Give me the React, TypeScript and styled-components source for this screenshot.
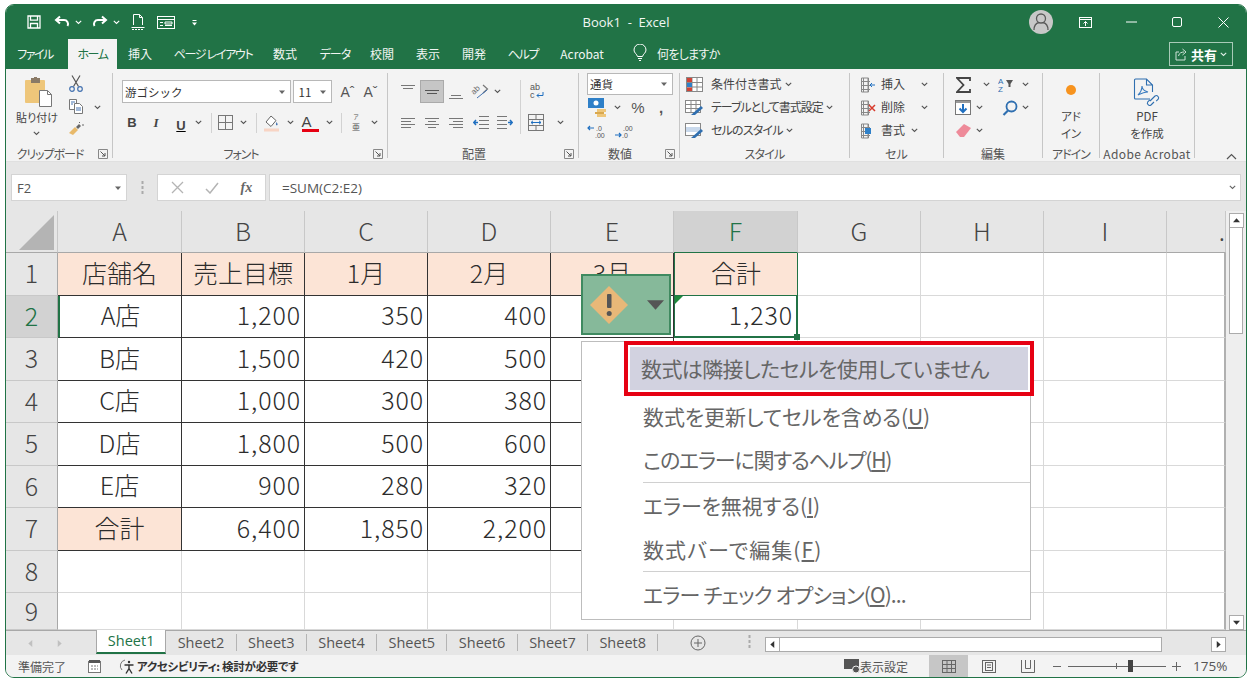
import React, {FC, ReactNode} from "react";
import styled, {createGlobalStyle} from "styled-components";

const jp = `"Noto Sans CJK JP", "Noto Sans", sans-serif`;
const latin = `"Open Sans", "Noto Sans CJK JP", sans-serif`;
const GREEN = "#217346";

const Global = createGlobalStyle`
  html, body { margin: 0; padding: 0; background: #fff; }
  body { font-family: ${jp}; }
  * { box-sizing: border-box; }
`;

const Window = styled.div`
  width: 1242px; height: 674px; margin: 4px 0 0 5px;
  display: flex; flex-direction: column; overflow: hidden;
  border: 1px solid ${GREEN}; border-radius: 9px; background: #f3f3f3;
`;
const TitleBar = styled.div`
  height: 34px; background: ${GREEN}; color: #fff; flex: none;
  display: grid; grid-template-columns: 1fr auto 1fr; align-items: center;
`;
const Left = styled.div`display: flex; align-items: center; padding-left: 18px;`;
const Right = styled.div`display: flex; justify-content: flex-end; align-items: center;`;
const Title = styled.div`font: 13px ${latin}; color: #f2f7f4; white-space: pre; margin-bottom: 1px;`;
const Slot = styled.div<{$w: number; $ml?: number}>`
  width: ${p => p.$w}px; margin-left: ${p => p.$ml || 0}px; flex: none;
  display: flex; align-items: center; justify-content: center;
  & > svg { flex: none; }
`;
const Avatar = styled.div`
  width: 24px; height: 24px; border-radius: 50%; background: #c8c8c8;
  display: flex; align-items: center; justify-content: center;
`;
const TabBar = styled.div`height: 30px; background: ${GREEN}; display: flex; flex: none; align-items: stretch;`;
const Tab = styled.div<{$w: number; $active?: boolean; $ml?: number; $ls?: number}>`
  width: ${p => p.$w}px; margin-left: ${p => p.$ml || 0}px; flex: none; padding-bottom: 2px;
  display: flex; align-items: center; justify-content: center;
  font: 12px ${jp}; font-feature-settings: "palt"; white-space: nowrap;
  letter-spacing: ${p => p.$ls || 0}px;
  color: ${p => p.$active ? GREEN : "#f1f6f3"}; background: ${p => p.$active ? "#f3f3f3" : "transparent"};
`;
const TellMe = styled.div`display: flex; align-items: center; gap: 10px; margin-left: 22px; padding-bottom: 2px; color: #f1f6f3; font: 12px ${jp}; font-feature-settings: "palt"; letter-spacing: -.7px;`;
const Share = styled.div`
  width: 64px; height: 24px; margin: 3px 13px 0 auto; border: 1px solid #a9cbb8;
  display: flex; align-items: center; justify-content: center; gap: 3px;
  color: #fff; font: 700 13px ${jp};
`;

const Ribbon = styled.div`height: 93px; flex: none; display: flex; padding-top: 4px; background: #f3f3f3; border-bottom: 1px solid #e0e0e0;`;
const Group = styled.div<{$w: number; $last?: boolean}>`
  width: ${p => p.$w}px; height: 85px; flex: none; display: flex; flex-direction: column;
  border-right: ${p => p.$last ? "none" : "1px solid #c6c6c6"};
`;
const GroupBody = styled.div<{$pl?: number}>`flex: 1; min-height: 0; padding-left: ${p => p.$pl || 0}px; display: flex;`;
const GroupFoot = styled.div`height: 15px; flex: none; display: flex; align-items: center; margin-bottom: -3px;`;
const GroupLabel = styled.div<{$ls?: number}>`flex: 1; text-align: center; font: 12px/15px ${jp}; color: #555; font-feature-settings: "palt"; white-space: nowrap; letter-spacing: ${p => p.$ls || 0}px;`;
const Launcher = styled.div`width: 18px; display: flex; align-items: center; justify-content: center;`;
const Col = styled.div<{$w?: number}>`
  display: flex; flex-direction: column;
  ${p => p.$w ? `width: ${p.$w}px; flex: none;` : ""}
`;
const Row = styled.div<{$h: number; $pl?: number; $mt?: number}>`
  height: ${p => p.$h}px; padding-left: ${p => p.$pl || 0}px; margin-top: ${p => p.$mt || 0}px;
  display: flex; align-items: center; flex: none;
`;
const Combo = styled.div<{$w: number; $h: number}>`
  width: ${p => p.$w}px; height: ${p => p.$h}px; flex: none; background: #fff; border: 1px solid #b8b8b8;
  display: flex; align-items: center; justify-content: space-between; padding: 0 5px 0 2px;
  font: 11.5px ${jp}; color: #333;
`;
const Sep = styled.div<{$h: number}>`width: 1px; height: ${p => p.$h}px; background: #d2d2d2; flex: none;`;
const Pressed = styled.div`
  width: 24px; height: 23px; background: #c6c6c6; border: 1px solid #aaa;
  display: flex; align-items: center; justify-content: center;
`;
const Glyph = styled.span<{$size?: number; $weight?: number; $color?: string; $serif?: boolean}>`
  font: ${p => p.$serif ? "italic" : "normal"} ${p => p.$weight || 400} ${p => p.$size || 13}px ${p => p.$serif ? `"Liberation Serif", serif` : `"Liberation Sans", sans-serif`};
  color: ${p => p.$color || "#444"}; line-height: 1;
`;
const Phonetic = styled.div`display: flex; flex-direction: column; align-items: center; color: #555; font-family: ${jp};`;
const PhoneticTop = styled.span`font-size: 5.5px; line-height: 8px;`;
const PhoneticMain = styled.span`font-size: 8px; line-height: 12px;`;
const RibbonText = styled.span<{$w?: number; $ml?: number; $ls?: number}>`
  font: 12px ${jp}; color: #444; font-feature-settings: "palt"; white-space: nowrap; padding-bottom: 2px;
  margin-left: ${p => p.$ml || 0}px; letter-spacing: ${p => p.$ls || 0}px;
  ${p => p.$w ? `width: ${p.$w}px; flex: none;` : ""}
`;
const Stack = styled.div`flex: 1; display: flex; flex-direction: column; align-items: center;`;
const StackText = styled.div<{$mt?: number}>`font: 11.5px/17px ${jp}; color: #444; text-align: center; font-feature-settings: "palt"; margin-top: ${p => p.$mt || 0}px;`;
const Dot = styled.div`width: 10px; height: 10px; border-radius: 50%; background: #f7931e; margin: 12px 0 13px;`;
const PasteLabel = styled.div`font: 11px/14px ${jp}; color: #444; text-align: center; font-feature-settings: "palt"; white-space: nowrap;`;
const Collapse = styled.div`flex: 1; display: flex; align-items: flex-end; justify-content: flex-end; padding: 0 9px 1px 0;`;

const FormulaBand = styled.div`height: 49px; flex: none; background: #e6e6e6; display: flex; padding: 12px 5px 0 5px;`;
const NameBox = styled.div`
  width: 116px; height: 27px; background: #fff; border: 1px solid #d4d4d4; flex: none;
  display: flex; align-items: center; justify-content: space-between; padding: 0 5px 0 5px;
  font: 13px ${latin}; color: #555;
`;
const Grip = styled.div`width: 30px; flex: none; height: 27px; display: flex; align-items: center; justify-content: center;`;
const FuncBox = styled.div`
  width: 109px; height: 27px; background: #fff; border: 1px solid #d4d4d4; flex: none;
  display: flex; align-items: center; justify-content: space-around; padding: 0 2px;
`;
const FormulaInput = styled.div`
  flex: 1; height: 27px; margin-left: 3px; background: #fff; border: 1px solid #d4d4d4;
  display: flex; align-items: center; justify-content: space-between; padding: 0 4px 0 12px;
  font: 13.5px ${latin}; color: #555;
`;

const SheetArea = styled.div`height: 419px; flex: none; display: flex; position: relative; background: #fff;`;
const Cells = styled.div`
  width: 1220px; flex: none; display: grid;
  grid-template-columns: 52px 124px repeat(4, 123px) 124px repeat(3, 123px) 59px;
  grid-template-rows: 42px repeat(8, 42.5px) 37px;
  font: 300 25px ${jp}; color: #2c2c2c;
`;
const Corner = styled.div`background: #e6e6e6; border-right: 1px solid #c8c8c8; border-bottom: 1px solid #a8a8a8; padding: 4px 0 0 13px;`;
const ColHead = styled.div<{$sel?: boolean; $end?: boolean}>`
  background: ${p => p.$sel ? "#d2d2d2" : "#e6e6e6"}; color: ${p => p.$sel ? GREEN : "#444"};
  border-right: 1px solid #c8c8c8; border-bottom: 1px solid ${p => p.$sel ? GREEN : "#a8a8a8"};
  display: flex; align-items: center; justify-content: ${p => p.$end ? "flex-end" : "center"};
  font: 300 25px ${jp}; overflow: hidden; padding-bottom: 4px;
`;
const RowHead = styled.div<{$sel?: boolean}>`
  background: ${p => p.$sel ? "#d2d2d2" : "#e6e6e6"}; color: ${p => p.$sel ? GREEN : "#444"};
  border-right: 1px solid #a8a8a8; border-bottom: 1px solid #c8c8c8;
  display: flex; align-items: center; justify-content: center; font: 300 25px ${jp}; overflow: hidden; padding-bottom: 3px;
`;
const Cell = styled.div<{$fill?: boolean; $dark?: boolean; $right?: boolean; $mark?: "green" | "sel"; $leftGreen?: boolean; $edge?: boolean}>`
  position: relative; overflow: visible; white-space: nowrap;
  background: ${p => p.$fill ? "#fce4d6" : "#fff"};
  display: flex; align-items: center; justify-content: ${p => p.$right ? "flex-end" : "center"};
  padding-right: ${p => p.$right ? "3px" : "0"}; padding-bottom: 4px;
  letter-spacing: ${p => p.$right ? ".9px" : "0"};
  border-right: 1px solid ${p => p.$mark ? GREEN : p.$dark ? "#333" : "#d9d9d9"};
  border-bottom: 1px solid ${p => p.$mark ? GREEN : p.$dark ? "#333" : "#d9d9d9"};
  ${p => p.$leftGreen ? `border-left: 2px solid ${GREEN};` : ""}
  ${p => p.$edge ? "border-right: 2px solid #b0b0b0;" : ""}
  ${p => p.$mark ? `border-left: 1px solid ${GREEN};` : ""}
  ${p => p.$mark === "sel" ? `border-right-width: 2px; border-bottom-width: 2px;` : ""}
`;
const Flag = styled.div`
  position: absolute; top: 0; left: 0; width: 0; height: 0;
  border-top: 8px solid #1e8a3c; border-right: 8px solid transparent;
`;
const Handle = styled.div`position: absolute; right: -4px; bottom: -4px; width: 6px; height: 6px; background: ${GREEN}; z-index: 4;`;

const VScroll = styled.div`width: 20px; flex: none; background: #eeeeee; display: flex; flex-direction: column; padding: 2px 3px 0 3px;`;
const ScrollBtn = styled.div`
  width: 15px; height: 15px; background: #fff; border: 1px solid #ababab; flex: none;
  display: flex; align-items: center; justify-content: center;
`;
const VThumb = styled.div`height: 106px; flex: none; background: #fff; border: 1px solid #ababab; border-top: none;`;
const Grow = styled.div`flex: 1;`;

const FloatButton = styled.div`
  position: absolute; left: 575px; top: 63px; width: 90px; height: 61px; z-index: 2;
  background: #86b99a; border: 2px solid #3f8a60;
  display: flex; align-items: center; padding-left: 7px; gap: 19px;
`;
const Menu = styled.div`
  position: absolute; left: 575px; top: 130px; width: 450px; height: 279px; z-index: 3;
  background: #fff; border: 1.5px solid #bdbdbd; color: #666;
  font: 21px ${jp}; font-feature-settings: "palt";
`;
const FlagItem = styled.div`
  margin: -1px -4px 0 42px; height: 55px; border: 4px solid #e60012; background: #fff; padding: 2px;
`;
const FlagInner = styled.div`height: 43px; background: #d2d2e0; display: flex; align-items: center; padding: 0 0 2px 11px; white-space: nowrap; letter-spacing: -.6px;`;
const MenuItem = styled.div<{$h: number; $ls?: number}>`
  height: ${p => p.$h}px; padding: 0 0 2px 61px; display: flex; align-items: center; white-space: nowrap;
  letter-spacing: ${p => p.$ls || 0}px;
`;
const MenuSep = styled.div`height: 1px; margin-left: 61px; background: #d0d0d0;`;

const SheetBar = styled.div`height: 25px; flex: none; background: #e6e6e6; border-top: 1px solid #a8a8a8; display: flex; align-items: flex-start;`;
const SheetNav = styled.div`width: 90px; flex: none; height: 24px; display: flex; align-items: center; padding-left: 21px; gap: 22px;`;
const SheetTab = styled.div<{$active?: boolean}>`
  width: 70.3px; flex: none; display: flex; align-items: center; justify-content: center; padding-bottom: 1px;
  font: 14.5px ${latin}; color: ${p => p.$active ? GREEN : "#555"};
  background: ${p => p.$active ? "#fff" : "transparent"};
  ${p => p.$active ? `border-left: 1px solid #a8a8a8; border-right: 1px solid #a8a8a8; border-bottom: 2px solid ${GREEN}; height: 24px; margin-top: -1px;` : "border-right: 1px solid #b4b4b4; margin-top: 3px; height: 17px;"}
`;
const BarIcon = styled(Slot)`margin-top: 4px;`;
const HScrollBtn = styled.div<{$mr?: number; $ml?: number}>`
  width: 15px; height: 15px; margin: 6px ${p => p.$mr || 0}px 0 ${p => p.$ml || 0}px; background: #fff; border: 1px solid #ababab; flex: none;
  display: flex; align-items: center; justify-content: center;
`;
const HThumb = styled.div`width: 382px; height: 15px; margin-top: 6px; background: #fff; border: 1px solid #ababab; border-left: none; flex: none;`;

const StatusBar = styled.div`flex: 1; background: #f3f3f3; display: flex; align-items: center; padding-left: 12px; font: 12px ${jp}; color: #555;`;
const StatusStrong = styled.span`font: 700 11.5px ${jp}; font-feature-settings: "palt"; color: #333; white-space: nowrap; margin-left: 3px; letter-spacing: -.3px;`;
const StatusRight = styled.div`margin-left: auto; display: flex; align-items: center; height: 100%;`;
const StatusText = styled.span`width: 48px; white-space: nowrap; flex: none;`;
const ViewBtn = styled.div<{$w: number; $on?: boolean}>`
  width: ${p => p.$w}px; height: 100%; flex: none; display: flex; align-items: center; justify-content: center;
  background: ${p => p.$on ? "#c6c6c6" : "transparent"};
`;
const Slider = styled.div`width: 98px; height: 12px; position: relative; flex: none; display: flex; align-items: center;`;
const SliderLine = styled.div`width: 100%; height: 1px; background: #666;`;
const SliderTick = styled.div`position: absolute; left: 48px; top: 3px; width: 1px; height: 6px; background: #666;`;
const SliderKnob = styled.div`position: absolute; left: 60px; top: 0; width: 5px; height: 12px; background: #444;`;
const ZoomText = styled.div`width: 60px; padding-left: 7px; font: 13.5px ${latin}; color: #555;`;

// small drawings
const Chev: FC<{c?: string}> = ({c = "#555"}) => (
  <svg width="7" height="5" viewBox="0 0 7 5"><path d="M.8.8 3.5 3.5 6.2.8" fill="none" stroke={c} strokeWidth="1.1" /></svg>
);
const Tri: FC<{d?: "down" | "up" | "left" | "right"; s?: number; c?: string}> = ({d = "down", s = 7, c = "#333"}) => {
  const pts = {down: "0,2 8,2 4,6.5", up: "0,6 8,6 4,1.5", left: "6,0 6,8 1.5,4", right: "2,0 2,8 6.5,4"}[d];
  return <svg width={s} height={s} viewBox="0 0 8 8"><polygon points={pts} fill={c} /></svg>;
};
const Lines: FC<{rows: number[][]; c?: string}> = ({rows, c = "#777"}) => (
  <svg width="18" height="18" viewBox="0 0 18 18">
    {rows.map(([x1, x2, y], i) => <line key={i} x1={x1} x2={x2} y1={y + .5} y2={y + .5} stroke={c} />)}
  </svg>
);
const Launch = () => (
  <svg width="10" height="10" viewBox="0 0 10 10"><path d="M.5 9.500V.5h9v9z" fill="none" stroke="#888" /><path d="M2.500 2.500 7 7M7 4v3H4" fill="none" stroke="#555" /></svg>
);
const Save = () => (
  <svg width="14" height="14" viewBox="0 0 14 14" fill="none" stroke="#fff" strokeWidth="1.3"><path d="M1 1h12v12H1zM3.500 1v4.200h7V1M3.500 13V8.500h7V13" /></svg>
);
const Undo = () => (
  <svg width="16" height="14" viewBox="0 0 16 14" fill="none" stroke="#fff" strokeWidth="2"><path d="M6 1.500 2 5l4 3.500" /><path d="M2.500 5H10a4 4 0 0 1 3.500 6" /></svg>
);
const Redo = () => (
  <svg width="16" height="14" viewBox="0 0 16 14" fill="none" stroke="#fff" strokeWidth="2"><path d="M10 1.500 14 5l-4 3.500" /><path d="M13.500 5H6a4 4 0 0 0-3.500 6" /></svg>
);
const Preview = () => (
  <svg width="14" height="16" viewBox="0 0 14 16" fill="none" stroke="#fff"><path d="M2.500 11V.5h6l3 3V11M8.500.5v3h3" /><path d="M.5 13.500h13" /><path d="M1 15.500h12" strokeWidth="1" strokeDasharray="2 1" /></svg>
);
const FormIcon = () => (
  <svg width="18" height="13" viewBox="0 0 18 13" fill="none" stroke="#fff"><rect x=".5" y=".5" width="17" height="12" /><path d="M.5 3.500h17M3 6.500h3M8 6h7v2H8zM3 9.500h3M8 9.500h7" /></svg>
);
const Customize = () => (
  <svg width="7" height="7" viewBox="0 0 7 7"><path d="M1.500 1.500h4" stroke="#fff" /><polygon points="1,3.500 6,3.500 3.500,6.500" fill="#fff" /></svg>
);
const Person = () => (
  <svg width="18" height="20" viewBox="0 0 18 20" fill="none" stroke="#5a5a5a" strokeWidth="1.3"><circle cx="9" cy="6.500" r="4.500" /><path d="M2 18c0-5 3-7 5-7.500M16 18c0-5-3-7-5-7.500" /></svg>
);
const DisplayOpts = () => (
  <svg width="13" height="11" viewBox="0 0 13 11" fill="none" stroke="#fff"><rect x=".5" y=".5" width="12" height="10" /><path d="M.5 2.500h12" /><path d="M6.500 9V4.500M4.500 6.500l2-2 2 2" /></svg>
);
const Min = () => <svg width="11" height="2" viewBox="0 0 11 2"><path d="M0 1h11" stroke="#fff" /></svg>;
const Max = () => <svg width="10" height="10" viewBox="0 0 10 10"><rect x=".5" y=".5" width="9" height="9" rx="1.500" fill="none" stroke="#fff" /></svg>;
const Close = () => <svg width="11" height="11" viewBox="0 0 11 11"><path d="M.5.5l10 10M10.500.5l-10 10" stroke="#fff" /></svg>;
const Bulb = () => (
  <svg width="14" height="18" viewBox="0 0 14 18" fill="none" stroke="#fff"><path d="M4.500 12.500C4 10 1 9 1 6a6 6 0 0 1 12 0c0 3-3 4-3.500 6.500z" /><path d="M5 14.500h4M6 16.500h2" /></svg>
);
const ShareIcon = () => (
  <svg width="13" height="13" viewBox="0 0 13 13" fill="none" stroke="#cfe3d8"><path d="M4 4H1v8h9V8" /><path d="M3.500 8c.5-3 3-4 5.500-4M7.500 1 11 4 7.500 7" /></svg>
);
const Paste = () => (
  <svg width="28" height="31" viewBox="0 0 28 31">
    <rect x="0" y="3" width="20" height="23" rx="1" fill="#eec67a" />
    <rect x="6" y="1" width="9" height="5" fill="#8a7a66" /><rect x="9" y="0" width="3" height="2" fill="#8a7a66" />
    <path d="M14.500 13.500h8l4 4v12h-12z" fill="#fff" stroke="#777" /><path d="M22.500 13.500v4h4" fill="none" stroke="#777" />
  </svg>
);
const Cut = () => (
  <svg width="14" height="17" viewBox="0 0 14 17" fill="none" stroke="#555" strokeWidth="1.2"><path d="M3 .5l6.500 11M11 .5 4.500 11.500" /><circle cx="3" cy="14" r="2.300" stroke="#4472b0" /><circle cx="11" cy="14" r="2.300" stroke="#4472b0" /></svg>
);
const Copy = () => (
  <svg width="14" height="15" viewBox="0 0 14 15" fill="#fff" stroke="#777"><path d="M.5.500h7v10h-7z" /><path d="M5.500 4.500h5l3 3v7h-8z" /><path d="M2 3h4M2 5h2M7 9h5M7 11h5" stroke="#4472b0" /></svg>
);
const Painter = () => (
  <svg width="16" height="14" viewBox="0 0 16 14"><path d="M1 11 7 5l3 3-5 5z" fill="#e8b96a" /><path d="M8 5l3-3 2 2-3 3z" fill="#666" /><path d="M11 1l1-1M14 3h2" stroke="#666" /></svg>
);
const Borders = () => (
  <svg width="15" height="15" viewBox="0 0 15 15" fill="none" stroke="#777"><rect x=".5" y=".5" width="14" height="14" /><path d="M7.500 1v13M1 7.500h13" /></svg>
);
const Fill = () => (
  <svg width="16" height="18" viewBox="0 0 16 18"><path d="M7 2 2 8l5 4.500 5-6z" fill="#fff" stroke="#666" /><path d="M12.500 8c1 1.500 1.500 2.500.8 3.200-.8.500-1.600-.2-1.300-1.200z" fill="#4472b0" /><rect x="0" y="14.500" width="15" height="3" fill="#f8d4c4" /></svg>
);
const OrientIcon = () => (
  <svg width="24" height="24" viewBox="0 0 24 24">
    <text x="0" y="0" fontSize="8" fill="#666" fontFamily="Liberation Sans" transform="translate(6 15) rotate(-45)">ab</text>
    <path d="M15 5l4.500 4-4.500 4" fill="none" stroke="#777" strokeWidth="1.200" />
    <path d="M9 18 19 10" stroke="#4472b0" />
  </svg>
);
const IndentIcon: FC<{flip?: boolean}> = ({flip}) => (
  <svg width="16" height="13" viewBox="0 0 16 13" transform={flip ? "scale(-1 1)" : undefined}>
    <path d="M6 .5h10M6 4.500h10M6 8.500h10M6 12.500h10" stroke="#777" /><path d="M5 6.500H1M3 4 .8 6.500 3 9" fill="none" stroke="#1f6fc0" strokeWidth="1.500" />
  </svg>
);
const Wrap = () => (
  <svg width="18" height="17" viewBox="0 0 18 17">
    <text x="3" y="7" fontSize="9" fill="#555" fontFamily="Liberation Sans">ab</text>
    <text x="3" y="15" fontSize="9" fill="#555" fontFamily="Liberation Sans">c</text>
    <path d="M16 9v3.500h-6M12 10.500l-2 2 2 2" fill="none" stroke="#1f6fc0" />
  </svg>
);
const Merge = () => (
  <svg width="16" height="17" viewBox="0 0 16 17" fill="none" stroke="#777"><rect x=".5" y=".5" width="15" height="16" /><path d="M1 5.500h14M1 11.500h14M8 1v4M8 12v4" /><path d="M3 8.500h10M5 6.800 3 8.500l2 1.700M11 6.800l2 1.700-2 1.700" stroke="#1f6fc0" /></svg>
);
const Currency = () => (
  <svg width="20" height="19" viewBox="0 0 20 19"><rect x="0" y="0" width="16" height="10" fill="#2f80c8" /><circle cx="8" cy="5" r="2.500" fill="#fff" /><rect x="9" y="11" width="9" height="3" fill="#eec67a" /><rect x="7" y="14" width="9" height="2" fill="#d9a84e" /><rect x="9" y="16" width="9" height="3" fill="#eec67a" /></svg>
);
const Decimal: FC<{dir: "inc" | "dec"}> = ({dir}) => (
  <svg width="20" height="15" viewBox="0 0 20 15">
    <path d={dir === "inc" ? "M1 4h6M3 2 1 4l2 2" : "M1 11h6M5 9l2 2-2 2"} fill="none" stroke="#1f6fc0" strokeWidth="1.200" />
    <text x="9" y="6.500" fontSize="7" fill="#555" fontFamily="Liberation Sans">{dir === "inc" ? ".0" : ".00"}</text>
    <text x="8" y="13.500" fontSize="7" fill="#555" fontFamily="Liberation Sans">{dir === "inc" ? ".00" : ".0"}</text>
  </svg>
);
const CondFormat = () => (
  <svg width="17" height="15" viewBox="0 0 17 15" fill="#fff" stroke="#888"><rect x=".5" y=".5" width="16" height="14" /><path d="M6 1v13M11 1v13M1 5.500h15M1 10h15" /><rect x="1" y="1" width="5" height="4" fill="#d04437" stroke="none" /><rect x="1" y="6" width="5" height="4" fill="#2f80c8" stroke="none" /><rect x="1" y="10.500" width="5" height="3.500" fill="#d04437" stroke="none" /></svg>
);
const TableFormat = () => (
  <svg width="19" height="16" viewBox="0 0 19 16" fill="#fff" stroke="#888"><rect x=".5" y=".5" width="15" height="12" /><path d="M1 4.500h14M1 8.500h14M6 1v11M11 1v11" /><path d="M6 15l10-9 2 2-8 7z" fill="#2f6fb0" stroke="none" /></svg>
);
const CellStyle = () => (
  <svg width="19" height="16" viewBox="0 0 19 16" fill="#fff" stroke="#888"><rect x=".5" y=".5" width="15" height="12" /><rect x="1" y="4" width="14" height="5" fill="#c9d9ec" stroke="none" /><path d="M6 15l10-9 2 2-8 7z" fill="#2f6fb0" stroke="none" /></svg>
);
const CellIcon: FC<{kind: "ins" | "del" | "fmt"}> = ({kind}) => (
  <svg width="16" height="16" viewBox="0 0 16 16" fill="none" stroke="#888">
    <path d="M3.500 1v14M8 1v14M1 4.500h9M1 8.500h9M1 12.500h9M1.500 1h7v14h-7z" />
    {kind === "ins" && <path d="M15 8H10M12 6 10 8l2 2" stroke="#1f6fc0" />}
    {kind === "del" && <path d="M9 5l6 6M15 5l-6 6" stroke="#d83b2d" strokeWidth="1.500" />}
    {kind === "fmt" && <rect x="5" y="5" width="6" height="6" fill="#2f80c8" stroke="none" />}
  </svg>
);
const SigmaGlyph = () => <svg width="15" height="16" viewBox="0 0 15 16"><path d="M14 4V1H1l6.500 7L1 15h13v-3" fill="none" stroke="#444" strokeWidth="1.800" /></svg>;
const Sort = () => (
  <svg width="16" height="16" viewBox="0 0 16 16"><text x="0" y="7" fontSize="8" fill="#2f6fb0" fontFamily="Liberation Sans">A</text><text x="0" y="15" fontSize="8" fill="#2f6fb0" fontFamily="Liberation Sans">Z</text><polygon points="8,3 15,3 12.500,7 12.500,10 10.500,10 10.500,7" fill="#555" /></svg>
);
const FillDown = () => (
  <svg width="16" height="15" viewBox="0 0 16 15"><rect x=".5" y=".5" width="15" height="14" fill="#fff" stroke="#777" /><rect x="1" y="1" width="14" height="2" fill="#999" /><path d="M8 4v8M4.500 8.500 8 12l3.500-3.500" fill="none" stroke="#1f6fc0" strokeWidth="2" /></svg>
);
const Find = () => (
  <svg width="16" height="16" viewBox="0 0 16 16" fill="none" stroke="#2f6fb0" strokeWidth="1.800"><circle cx="9.500" cy="6.500" r="5" /><path d="M6 10.500 1.500 15" strokeWidth="2.200" /></svg>
);
const Eraser = () => (
  <svg width="15" height="13" viewBox="0 0 15 13"><path d="M0 8 8 0l7 4-7 9H4z" fill="#ee8a99" /></svg>
);
const Pdf = () => (
  <svg width="28" height="29" viewBox="0 0 28 29" fill="none" stroke="#2f6fb0" strokeWidth="1.100">
    <path d="M17 21H2.500a1 1 0 0 1-1-1V2a1 1 0 0 1 1-1h11l6 6v7M13.500 1v6h6" />
    <path d="M5 17c2-2 4-6 4-9 0 3 2 5 6 6-3 0-6 1-10 3z" stroke="#3a7cc0" />
    <path d="M17 23l5-5a2.300 2.300 0 0 1 3.200 3.200l-2 2M21 24l-3 3a2.300 2.300 0 0 1-3.200-3.200l2-2" />
  </svg>
);
const TriCorner = () => <svg width="36" height="36" viewBox="0 0 36 36"><polygon points="35,0 35,35 0,35" fill="#b4b4b4" /></svg>;
const Warn = () => (
  <svg width="38" height="38" viewBox="0 0 38 38"><polygon points="19,0 38,19 19,38 0,19" fill="#e8b878" /><rect x="17" y="8" width="4.500" height="14" rx="1" fill="#555" /><circle cx="19.200" cy="27.500" r="2.500" fill="#555" /></svg>
);
const XMark = () => <svg width="13" height="13" viewBox="0 0 13 13"><path d="M1 1l11 11M12 1 1 12" stroke="#b4b4b4" strokeWidth="1.300" /></svg>;
const Check = () => <svg width="14" height="12" viewBox="0 0 14 12"><path d="M1 7l4 4 8-10" fill="none" stroke="#b4b4b4" strokeWidth="1.500" /></svg>;
const Dots = () => <svg width="3" height="13" viewBox="0 0 3 13"><path d="M1.500 0v3M1.500 5v3M1.500 10v3" stroke="#aaa" strokeWidth="2" /></svg>;
const PlusCircle = () => <svg width="16" height="16" viewBox="0 0 16 16" fill="none" stroke="#666"><circle cx="8" cy="8" r="7" /><path d="M8 4v8M4 8h8" /></svg>;
const MacroIcon = () => <svg width="13" height="14" viewBox="0 0 13 14"><rect x=".5" y="2.500" width="12" height="11" fill="#fff" stroke="#777" /><rect x="1" y="1" width="11" height="3" fill="#555" /><path d="M3 7h2M6 7h2M9 7h1M3 10h2M6 10h2M9 10h1" stroke="#777" /></svg>;
const AccessIcon = () => <svg width="17" height="17" viewBox="0 0 17 17" fill="none"><path d="M7 2a6 6 0 0 0-3 10" stroke="#777" /><path d="M6.500 7h9M11 7v3.500l-3 5M11 10.500l3 5" stroke="#333" strokeWidth="1.400" /><circle cx="11" cy="4" r="1.200" fill="#333" /></svg>;
const DisplaySet = () => <svg width="17" height="15" viewBox="0 0 17 15"><rect x="0" y="0" width="15" height="10" fill="#555" /><circle cx="12" cy="10.500" r="3.500" fill="#555" stroke="#f3f3f3" /></svg>;
const ViewNormal = () => <svg width="14" height="13" viewBox="0 0 14 13" fill="none" stroke="#666"><rect x=".5" y=".5" width="13" height="12" /><path d="M5 1v11M9.500 1v11M1 4.500h12M1 8.500h12" /></svg>;
const ViewPage = () => <svg width="14" height="13" viewBox="0 0 14 13" fill="none" stroke="#666"><rect x=".5" y=".5" width="13" height="12" /><rect x="3.500" y="2.500" width="7" height="8" /><path d="M5 5h4M5 7.500h4" /></svg>;
const ViewBreak = () => <svg width="14" height="13" viewBox="0 0 14 13" fill="none" stroke="#666"><path d="M.5 0v12.500h13V0" /><path d="M4.500 0v8.500h5V0" /></svg>;
const Minus = () => <svg width="8" height="1" viewBox="0 0 8 1"><path d="M0 .5h8" stroke="#666" /></svg>;
const PlusSmall = () => <svg width="9" height="9" viewBox="0 0 9 9"><path d="M0 4.500h9M4.500 0v9" stroke="#666" /></svg>;

const tabs: [string, number, number][] = [["ファイル", 58, -1.5], ["ホーム", 49, -1.5], ["挿入", 46, 0], ["ページ レイアウト", 100, -1.3], ["数式", 44, 0], ["データ", 56, -1], ["校閲", 38, 0], ["表示", 54, 0], ["開発", 38, 0], ["ヘルプ", 60, -1.2], ["Acrobat", 58, 0]];
const colNames = ["A", "B", "C", "D", "E", "F", "G", "H", "I"];
const table: string[][] = [
  ["店舗名", "売上目標", "1月", "2月", "3月", "合計"],
  ["A店", "1,200", "350", "400", "", "1,230"],
  ["B店", "1,500", "420", "500", "", ""],
  ["C店", "1,000", "300", "380", "", ""],
  ["D店", "1,800", "500", "600", "", ""],
  ["E店", "900", "280", "320", "", ""],
  ["合計", "6,400", "1,850", "2,200", "", ""],
];
const sheets = ["Sheet1", "Sheet2", "Sheet3", "Sheet4", "Sheet5", "Sheet6", "Sheet7", "Sheet8"];

const Foot: FC<{label: string; launch?: boolean; ls?: number}> = ({label, launch, ls}) => (
  <GroupFoot><GroupLabel $ls={ls}>{label}</GroupLabel>{launch && <Launcher><Launch /></Launcher>}</GroupFoot>
);

const StyleRow: FC<{icon: ReactNode; text: string; ls?: number}> = ({icon, text, ls}) => (
  <Row $h={23} $pl={4}>
    <Slot $w={20}>{icon}</Slot><RibbonText $ml={7} $ls={ls}>{text}</RibbonText><Slot $w={14}><Chev /></Slot>
  </Row>
);
const CellRow: FC<{icon: ReactNode; text: string; wide?: boolean}> = ({icon, text, wide}) => (
  <Row $h={23} $pl={8}>
    <Slot $w={20}>{icon}</Slot><RibbonText $ml={3} $w={wide ? 36 : 26}>{text}</RibbonText><Slot $w={14}><Chev /></Slot>
  </Row>
);

const RibbonPanel: FC = () => (
  <Ribbon>
    <Group $w={107}>
      <GroupBody>
        <Col $w={62}>
          <Row $h={36} $pl={19} $mt={1}><Paste /></Row>
          <PasteLabel>貼り付け</PasteLabel>
          <Row $h={18} $pl={27}><Chev /></Row>
        </Col>
        <Col $w={20}>
          <Row $h={20}><Slot $w={16}><Cut /></Slot></Row>
          <Row $h={24} $mt={1}><Slot $w={16}><Copy /></Slot></Row>
          <Row $h={22}><Slot $w={16}><Painter /></Slot></Row>
        </Col>
        <Col>
          <Row $h={18} $mt={25}><Slot $w={19}><Chev /></Slot></Row>
        </Col>
      </GroupBody>
      <Foot label="クリップボード" launch ls={-1} />
    </Group>

    <Group $w={275}>
      <GroupBody $pl={7}>
        <Col>
          <Row $h={23} $pl={2} $mt={7}>
            <Combo $w={169} $h={23}><span>游ゴシック</span><Tri s={6} c="#666" /></Combo>
            <Slot $w={2} />
            <Combo $w={39} $h={23}><span>&nbsp;11</span><Tri s={6} c="#666" /></Combo>
            <Slot $w={19} $ml={6}><Glyph $size={14} $color="#555">Aˆ</Glyph></Slot>
            <Slot $w={19} $ml={4}><Glyph $size={14} $color="#555">Aˇ</Glyph></Slot>
          </Row>
          <Row $h={27} $mt={6}>
            <Slot $w={24}><Glyph $weight={700}>B</Glyph></Slot>
            <Slot $w={24}><Glyph $serif $weight={700}>I</Glyph></Slot>
            <Slot $w={26}><u><Glyph $weight={700}>U</Glyph></u></Slot>
            <Slot $w={8}><Chev /></Slot>
            <Slot $w={18}><Sep $h={20} /></Slot>
            <Slot $w={10}><Borders /></Slot>
            <Slot $w={26}><Chev /></Slot>
            <Slot $w={1}><Sep $h={20} /></Slot>
            <Slot $w={30}><Fill /></Slot>
            <Slot $w={6}><Chev /></Slot>
            <Slot $w={34}>
              <Col>
                <Glyph $size={15} $color="#444">A</Glyph>
                <svg width="17" height="3"><rect width="17" height="3" fill="#e60012" /></svg>
              </Col>
            </Slot>
            <Slot $w={4}><Chev /></Slot>
            <Slot $w={20}><Sep $h={20} /></Slot>
            <Slot $w={10}><Phonetic><PhoneticTop>ア</PhoneticTop><PhoneticMain>亜</PhoneticMain></Phonetic></Slot>
            <Slot $w={26}><Chev /></Slot>
          </Row>
        </Col>
      </GroupBody>
      <Foot label="フォント" launch ls={-1} />
    </Group>

    <Group $w={191}>
      <GroupBody $pl={8}>
        <Col $w={124}>
          <Row $h={23} $mt={7}>
            <Slot $w={24}><Lines rows={[[2, 16, 2], [4, 14, 5]]} /></Slot>
            <Slot $w={24}><Pressed><Lines rows={[[2, 16, 7], [4, 14, 10]]} c="#555" /></Pressed></Slot>
            <Slot $w={24}><Lines rows={[[4, 14, 12], [2, 16, 15]]} /></Slot>
            <Slot $w={24}><OrientIcon /></Slot>
            <Slot $w={10}><Chev /></Slot>
          </Row>
          <Row $h={27} $mt={6}>
            <Slot $w={24}><Lines rows={[[2, 16, 4], [2, 12, 7], [2, 16, 10], [2, 12, 13]]} /></Slot>
            <Slot $w={24}><Lines rows={[[2, 16, 4], [5, 13, 7], [2, 16, 10], [5, 13, 13]]} /></Slot>
            <Slot $w={24}><Lines rows={[[2, 16, 4], [6, 16, 7], [2, 16, 10], [6, 16, 13]]} /></Slot>
            <Slot $w={26}><IndentIcon /></Slot>
            <Slot $w={22}><IndentIcon flip /></Slot>
          </Row>
        </Col>
        <Col $w={1}><Row $h={54} $mt={7}><Sep $h={54} /></Row></Col>
        <Col>
          <Row $h={23} $mt={7}><Slot $w={30}><Wrap /></Slot></Row>
          <Row $h={27} $mt={6}><Slot $w={30}><Merge /></Slot><Slot $w={18}><Chev /></Slot></Row>
        </Col>
      </GroupBody>
      <Foot label="配置" launch />
    </Group>

    <Group $w={101}>
      <GroupBody $pl={8}>
        <Col>
          <Combo $w={86} $h={22}><span>通貨</span><Tri s={6} c="#666" /></Combo>
          <Row $h={24}>
            <Slot $w={22}><Currency /></Slot>
            <Slot $w={16}><Chev /></Slot>
            <Slot $w={26}><Glyph $size={15} $color="#555">%</Glyph></Slot>
            <Slot $w={20}><Glyph $size={15} $weight={700} $color="#555">,</Glyph></Slot>
          </Row>
          <Row $h={24}>
            <Slot $w={20}><Decimal dir="inc" /></Slot>
            <Slot $w={34}><Decimal dir="dec" /></Slot>
          </Row>
        </Col>
      </GroupBody>
      <Foot label="数値" launch />
    </Group>

    <Group $w={170}>
      <GroupBody>
        <Col>
          <StyleRow icon={<CondFormat />} text="条件付き書式" />
          <StyleRow icon={<TableFormat />} text="テーブルとして書式設定" ls={-1.05} />
          <StyleRow icon={<CellStyle />} text="セルのスタイル" ls={-.8} />
        </Col>
      </GroupBody>
      <Foot label="スタイル" ls={-.8} />
    </Group>

    <Group $w={94}>
      <GroupBody>
        <Col>
          <CellRow icon={<CellIcon kind="ins" />} text="挿入" wide />
          <CellRow icon={<CellIcon kind="del" />} text="削除" wide />
          <CellRow icon={<CellIcon kind="fmt" />} text="書式" />
        </Col>
      </GroupBody>
      <Foot label="セル" />
    </Group>

    <Group $w={99}>
      <GroupBody $pl={9}>
        <Col>
          <Row $h={23}>
            <Slot $w={20}><SigmaGlyph /></Slot><Slot $w={26}><Chev /></Slot>
            <Slot $w={14}><Sort /></Slot><Slot $w={24}><Chev /></Slot>
          </Row>
          <Row $h={23}>
            <Slot $w={20}><FillDown /></Slot><Slot $w={12}><Chev /></Slot>
            <Slot $w={15} />
            <Slot $w={20}><Find /></Slot><Slot $w={10}><Chev /></Slot>
          </Row>
          <Row $h={23}>
            <Slot $w={20}><Eraser /></Slot><Slot $w={12}><Chev /></Slot>
          </Row>
        </Col>
      </GroupBody>
      <Foot label="編集" />
    </Group>

    <Group $w={57}>
      <GroupBody>
        <Stack><Dot /><StackText>アド<br />イン</StackText></Stack>
      </GroupBody>
      <Foot label="アドイン" ls={-1} />
    </Group>

    <Group $w={95}>
      <GroupBody>
        <Stack>
          <Row $h={32} $mt={3}><Pdf /></Row>
          <StackText>PDF<br />を作成</StackText>
        </Stack>
      </GroupBody>
      <Foot label="Adobe Acrobat" ls={.4} />
    </Group>

    <Collapse>
      <svg width="11" height="7" viewBox="0 0 11 7"><path d="M1 6l4.500-4.500L10 6" fill="none" stroke="#555" strokeWidth="1.200" /></svg>
    </Collapse>
  </Ribbon>
);

const Grid: FC = () => (
  <Cells>
    <Corner><TriCorner /></Corner>
    {colNames.map(n => <ColHead key={n} $sel={n === "F"}>{n}</ColHead>)}
    <ColHead $end>.</ColHead>
    {Array.from({length: 9}, (_, r) => {
      const data = table[r] || [];
      return (
        <React.Fragment key={r}>
          <RowHead $sel={r === 1}>{r + 1}</RowHead>
          {Array.from({length: 10}, (_, c) => {
            const text = data[c] || "";
            const inTable = r < 7 && c < 5;
            const right = r > 0 && c > 0 && c < 6;
            const mark = r === 0 && c === 5 ? "green" : r === 1 && c === 5 ? "sel" : undefined;
            return (
              <Cell
                key={c}
                $dark={inTable}
                $fill={r === 0 && c < 6 || r === 6 && c === 0}
                $right={right}
                $mark={mark}
                $leftGreen={r === 1 && c === 0}
                $edge={c === 9}
              >
                {text}
                {mark === "sel" && <Flag />}
                {mark === "sel" && <Handle />}
              </Cell>
            );
          })}
        </React.Fragment>
      );
    })}
  </Cells>
);

const App: FC = () => (
  <>
    <Global />
    <Window>
      <TitleBar>
        <Left>
          <Slot $w={20}><Save /></Slot>
          <Slot $w={18} $ml={9}><Undo /></Slot>
          <Slot $w={8} $ml={3}><Chev c="#fff" /></Slot>
          <Slot $w={18} $ml={9}><Redo /></Slot>
          <Slot $w={8} $ml={3}><Chev c="#fff" /></Slot>
          <Slot $w={18} $ml={9}><Preview /></Slot>
          <Slot $w={20} $ml={9}><FormIcon /></Slot>
          <Slot $w={8} $ml={14}><Customize /></Slot>
        </Left>
        <Title>Book1  -  Excel</Title>
        <Right>
          <Slot $w={42}><Avatar><Person /></Avatar></Slot>
          <Slot $w={46}><DisplayOpts /></Slot>
          <Slot $w={46}><Min /></Slot>
          <Slot $w={46}><Max /></Slot>
          <Slot $w={46}><Close /></Slot>
        </Right>
      </TitleBar>
      <TabBar>
        {tabs.map(([t, w, ls]) => <Tab key={t} $w={w} $ls={ls} $active={t === "ホーム"} $ml={t === "ホーム" ? 4 : 0}>{t}</Tab>)}
        <TellMe><Bulb /><span>何をしますか</span></TellMe>
        <Share><ShareIcon /><span>共有</span><Chev c="#dfeee6" /></Share>
      </TabBar>
      <RibbonPanel />
      <FormulaBand>
        <NameBox><span>F2</span><Tri s={6} c="#666" /></NameBox>
        <Grip><Dots /></Grip>
        <FuncBox><XMark /><Check /><Glyph $serif $size={14} $weight={700} $color="#666">fx</Glyph></FuncBox>
        <FormulaInput><span>=SUM(C2:E2)</span><Chev c="#666" /></FormulaInput>
      </FormulaBand>
      <SheetArea>
        <Grid />
        <VScroll>
          <ScrollBtn><Tri d="up" /></ScrollBtn>
          <VThumb />
          <Grow />
          <ScrollBtn><Tri /></ScrollBtn>
        </VScroll>
        <FloatButton>
          <Warn />
          <Tri s={17} c="#555" />
        </FloatButton>
        <Menu>
          <FlagItem><FlagInner>数式は隣接したセルを使用していません</FlagInner></FlagItem>
          <MenuItem $h={41} $ls={-.12}><span>数式を更新してセルを含める(<u>U</u>)</span></MenuItem>
          <MenuItem $h={45} $ls={-1.2}><span>このエラーに関するヘルプ(<u>H</u>)</span></MenuItem>
          <MenuSep />
          <MenuItem $h={46} $ls={-.15}><span>エラーを無視する(<u>I</u>)</span></MenuItem>
          <MenuItem $h={42} $ls={1.1}><span>数式バーで編集(<u>F</u>)</span></MenuItem>
          <MenuSep />
          <MenuItem $h={46} $ls={-.85}><span>エラー チェック オプション(<u>O</u>)...</span></MenuItem>
        </Menu>
      </SheetArea>
      <SheetBar>
        <SheetNav><Tri d="left" c="#c0c0c0" /><Tri d="right" c="#c0c0c0" /></SheetNav>
        {sheets.map((s, i) => <SheetTab key={s} $active={i === 0}>{s}</SheetTab>)}
        <BarIcon $w={16} $ml={32}><PlusCircle /></BarIcon>
        <BarIcon $w={3} $ml={42}><Dots /></BarIcon>
        <HScrollBtn $ml={14}><Tri d="left" /></HScrollBtn>
        <HThumb />
        <Grow />
        <HScrollBtn $mr={20}><Tri d="right" /></HScrollBtn>
      </SheetBar>
      <StatusBar>
        <span>準備完了</span>
        <Slot $w={16} $ml={20}><MacroIcon /></Slot>
        <Slot $w={16} $ml={16}><AccessIcon /></Slot>
        <StatusStrong>アクセシビリティ: 検討が必要です</StatusStrong>
        <StatusRight>
          <Slot $w={16}><DisplaySet /></Slot>
          <StatusText>表示設定</StatusText>
          <Slot $w={21} />
          <ViewBtn $w={39} $on><ViewNormal /></ViewBtn>
          <ViewBtn $w={42}><ViewPage /></ViewBtn>
          <ViewBtn $w={36}><ViewBreak /></ViewBtn>
          <Slot $w={22}><Minus /></Slot>
          <Slider><SliderLine /><SliderTick /><SliderKnob /></Slider>
          <Slot $w={20}><PlusSmall /></Slot>
          <ZoomText>175%</ZoomText>
        </StatusRight>
      </StatusBar>
    </Window>
  </>
);

export default App;
